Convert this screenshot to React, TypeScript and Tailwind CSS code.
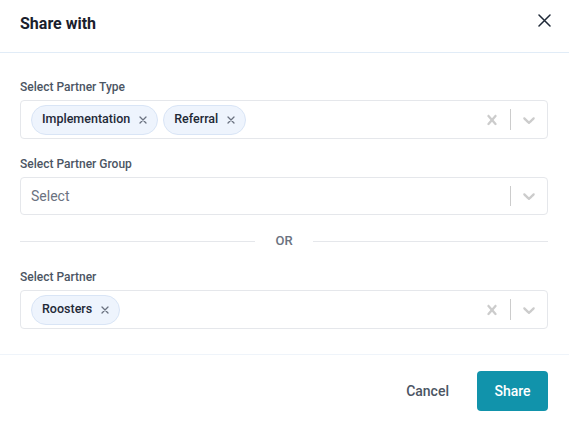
import React from "react";

const CROSS =
  "M14.348 14.849c-0.469 0.469-1.229 0.469-1.697 0l-2.651-3.030-2.651 3.029c-0.469 0.469-1.229 0.469-1.697 0-0.469-0.469-0.469-1.229 0-1.697l2.758-3.15-2.759-3.152c-0.469-0.469-0.469-1.228 0-1.697s1.228-0.469 1.697 0l2.652 3.031 2.651-3.031c0.469-0.469 1.228-0.469 1.697 0s0.469 1.229 0 1.697l-2.758 3.152 2.758 3.15c0.469 0.469 0.469 1.229 0 1.698z";
const CHEVRON =
  "M4.516 7.548c0.436-0.446 1.043-0.481 1.576 0l3.908 3.747 3.908-3.747c0.533-0.481 1.141-0.446 1.574 0 0.436 0.445 0.408 1.197 0 1.615-0.406 0.418-4.695 4.502-4.695 4.502-0.217 0.223-0.502 0.335-0.787 0.335s-0.57-0.112-0.789-0.335c0 0-4.287-4.084-4.695-4.502s-0.436-1.17 0-1.615z";

function Indicator({ d }: { d: string }) {
  return (
    <div className="flex w-9 items-center justify-center self-stretch">
      <svg width="20" height="20" viewBox="0 0 20 20" className="fill-[#cccccc]">
        <path d={d} />
      </svg>
    </div>
  );
}

function Chip({ label }: { label: string }) {
  return (
    <span className="flex h-[30px] items-center gap-[9px] rounded-full border border-[#d9e5f6] bg-[#eef4fd] pl-[10px] pr-[10px] text-[12.5px] font-medium text-[#1f2937]">
      {label}
      <svg width="8" height="8" viewBox="0 0 8 8" className="stroke-[#6b7280]" strokeWidth="1.3" strokeLinecap="round">
        <path d="M1 1L7 7M7 1L1 7" />
      </svg>
    </span>
  );
}

function MultiSelect({
  values,
  placeholder,
}: {
  values: string[];
  placeholder?: string;
}) {
  const hasValues = values.length > 0;
  return (
    <div
      className={`flex items-stretch rounded-[4px] border border-[#e5e7eb] bg-white ${
        hasValues ? "h-[39px]" : "h-[38px]"
      }`}
    >
      <div className="flex flex-1 items-center gap-[5px] pl-[10px]">
        {hasValues ? (
          values.map((v) => <Chip key={v} label={v} />)
        ) : (
          <span className="text-[14px] text-[#6b7280]">{placeholder}</span>
        )}
      </div>
      {hasValues && <Indicator d={CROSS} />}
      <div className="my-2 w-px bg-[#cccccc]" />
      <Indicator d={CHEVRON} />
    </div>
  );
}

function Field({
  label,
  children,
}: {
  label: string;
  children: React.ReactNode;
}) {
  return (
    <div className="flex flex-col">
      <label className="mb-[5px] text-[12px] leading-4 font-medium text-[#4b5563]">
        {label}
      </label>
      {children}
    </div>
  );
}

export default function App() {
  return (
    <div
      className="flex h-screen w-full flex-col bg-white"
      style={{ fontFamily: "Roboto, 'Liberation Sans', sans-serif" }}
    >
      <header className="flex h-[53px] items-start justify-between border-b border-[#e1ecf7] pl-5 pr-[13px] pt-[14px]">
        <h2 className="text-[16px] leading-5 font-bold text-[#1a202c]">Share with</h2>
        <button className="mt-[-6px] flex h-6 w-6 items-center justify-center">
          <svg width="13" height="13" viewBox="0 0 13 13" className="stroke-[#1f2937]" strokeWidth="1.5" strokeLinecap="round">
            <path d="M1 1L12 12M12 1L1 12" />
          </svg>
        </button>
      </header>

      <main className="flex flex-col pl-5 pr-[21px] pt-[26px] pb-[25px]">
        <Field label="Select Partner Type">
          <MultiSelect values={["Implementation", "Referral"]} />
        </Field>

        <div className="mt-[17px]">
          <Field label="Select Partner Group">
            <MultiSelect values={[]} placeholder="Select" />
          </Field>
        </div>

        <div className="mt-4 flex h-5 items-center gap-[20px]">
          <div className="h-px flex-1 bg-[#e5e7eb]" />
          <span className="text-[13px] font-medium text-[#6b7280]">OR</span>
          <div className="h-px flex-1 bg-[#e5e7eb]" />
        </div>

        <div className="mt-[18px]">
          <Field label="Select Partner">
            <MultiSelect values={["Roosters"]} />
          </Field>
        </div>
      </main>

      <footer className="flex items-center justify-end gap-2 border-t border-[#eff4fa] pl-5 pr-[21px] pt-4">
        <button className="h-10 px-5 text-[14px] font-medium text-[#4b5563]">Cancel</button>
        <button className="h-10 w-[71px] rounded-[4px] bg-[#1193ab] text-[14px] font-medium text-white">
          Share
        </button>
      </footer>
    </div>
  );
}
